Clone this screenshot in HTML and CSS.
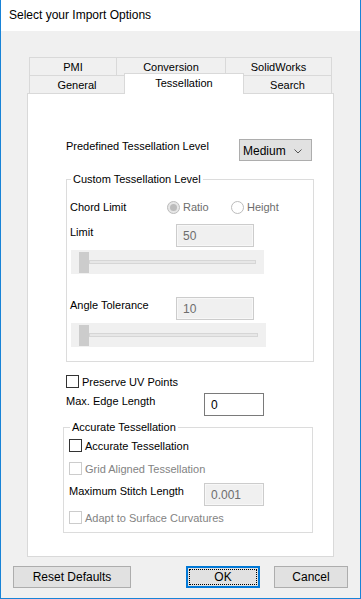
FILE: index.html
```html
<!DOCTYPE html>
<html lang="en">
<head>
    <meta charset="UTF-8">
    <title>Select your Import Options</title>
    <link rel="stylesheet" href="styles.css">
</head>
<body>
    <div class="window">
        <div class="titlebar">Select your Import Options</div>

        <div class="client">
            <div class="tabs">
                <div class="tab-row">
                    <div class="tab tab-pmi">PMI</div>
                    <div class="tab tab-conversion">Conversion</div>
                    <div class="tab tab-solidworks">SolidWorks</div>
                </div>
                <div class="tab-row row-front">
                    <div class="tab tab-general">General</div>
                    <div class="tab tab-tessellation active">Tessellation</div>
                    <div class="tab tab-search">Search</div>
                </div>
            </div>

            <div class="panel">
                <div class="row predefined">
                    <span class="label predefined-label">Predefined Tessellation Level</span>
                    <div class="select">
                        <span>Medium</span>
                        <svg width="8" height="5" viewBox="0 0 8 5"><path d="M0.5 0.5 L4 4 L7.5 0.5" fill="none" stroke="#555" stroke-width="1"/></svg>
                    </div>
                </div>

                <fieldset class="group custom">
                    <legend>Custom Tessellation Level</legend>

                    <div class="row chord">
                        <span class="label chord-label">Chord Limit</span>
                        <span class="radio-item ratio"><span class="radio checked"></span>Ratio</span>
                        <span class="radio-item"><span class="radio"></span>Height</span>
                    </div>

                    <div class="row field-row limit-row">
                        <span class="label field-label">Limit</span>
                        <div class="input disabled">50</div>
                    </div>
                    <div class="slider slider-1">
                        <div class="thumb"></div>
                        <div class="track"></div>
                    </div>

                    <div class="row field-row angle-row">
                        <span class="label field-label">Angle Tolerance</span>
                        <div class="input disabled">10</div>
                    </div>
                    <div class="slider slider-2">
                        <div class="thumb"></div>
                        <div class="track"></div>
                    </div>
                </fieldset>

                <div class="row check-row uv">
                    <span class="checkbox"></span>Preserve UV Points
                </div>

                <div class="row field-row edge-row">
                    <span class="label edge-label">Max. Edge Length</span>
                    <div class="input edge-input">0</div>
                </div>

                <fieldset class="group accurate">
                    <legend>Accurate Tessellation</legend>

                    <div class="row check-row acc-check">
                        <span class="checkbox"></span>Accurate Tessellation
                    </div>
                    <div class="row check-row grid-check off">
                        <span class="checkbox"></span>Grid Aligned Tessellation
                    </div>
                    <div class="row field-row stitch-row">
                        <span class="label stitch-label">Maximum Stitch Length</span>
                        <div class="input disabled stitch-input">0.001</div>
                    </div>
                    <div class="row check-row adapt-check off">
                        <span class="checkbox"></span>Adapt to Surface Curvatures
                    </div>
                </fieldset>
            </div>

            <div class="buttons">
                <button class="btn reset">Reset Defaults</button>
                <button class="btn ok">OK</button>
                <button class="btn cancel">Cancel</button>
            </div>
        </div>
    </div>
</body>
</html>
```

FILE: styles.css
```css
body {
    margin: 0;
    font-family: "Liberation Sans", Arial, sans-serif;
    font-size: 11px;
    color: #000;
    background: #f0f0f0;
}
.window {
    width: 361px;
    height: 599px;
    box-sizing: border-box;
    border: 1px solid #1883d7;
    border-top: none;
    background: #f0f0f0;
}
.titlebar {
    height: 31px;
    line-height: 31px;
    padding-left: 8px;
    background: #ffffff;
    font-size: 12px;
}
.client {
    padding: 26px 12px 0 12px;
}

/* tabs */
.tabs {
    margin-left: 16px;
    width: 303px;
}
.tab-row {
    display: flex;
    height: 19px;
}
.row-front {
    margin-top: -1px;
    height: 18px;
}
.tab {
    box-sizing: border-box;
    height: 100%;
    border: 1px solid #d9d9d9;
    border-bottom: none;
    background: #f0f0f0;
    text-align: center;
    line-height: 18px;
}
.tab + .tab {
    margin-left: -1px;
}
.tab-pmi { width: 88px; }
.tab-conversion { width: 110px; }
.tab-solidworks { width: 107px; }
.tab-general { width: 96px; }
.tab-tessellation { width: 120px; }
.tab-search { width: 89px; }
.tab.active {
    position: relative;
    z-index: 1;
    background: #ffffff;
    height: 21px;
    margin-top: -2px;
    line-height: 18px;
}

/* panel */
.panel {
    box-sizing: border-box;
    margin-left: 14px;
    width: 307px;
    height: 464px;
    border: 1px solid #d9d9d9;
    background: #ffffff;
    padding: 45px 0 0 35px;
}
.row {
    display: flex;
    align-items: flex-start;
}
.label {
    line-height: 14px;
}
.predefined {
    margin-left: 3px;
    height: 22px;
}
.predefined-label {
    width: 173px;
}
.select {
    box-sizing: border-box;
    width: 73px;
    height: 22px;
    border: 1px solid #adadad;
    background: #e1e1e1;
    display: flex;
    align-items: center;
    justify-content: space-between;
    padding: 2px 9px 0 3px;
    font-size: 12px;
}

/* group boxes */
.group {
    margin: 0;
    padding: 0 0 0 3px;
    border: 1px solid #dcdcdc;
    box-sizing: border-box;
}
.group legend {
    padding: 0 2px;
    margin-left: 1px;
    line-height: 13px;
}
.custom {
    margin: 12px 0 0 3px;
    width: 248px;
    padding-bottom: 14px;
}
.accurate {
    margin-top: 5px;
    width: 250px;
    padding-left: 5px;
    padding-bottom: 8px;
}

.chord {
    margin-top: 14px;
    height: 14px;
    align-items: center;
}
.chord-label {
    width: 97px;
}
.radio-item {
    display: flex;
    align-items: center;
    color: #6d6d6d;
}
.ratio {
    width: 64px;
}
.radio {
    box-sizing: border-box;
    width: 13px;
    height: 13px;
    border: 1px solid #bcbcbc;
    border-radius: 50%;
    background: #ffffff;
    margin-right: 3px;
    display: flex;
    align-items: center;
    justify-content: center;
}
.radio.checked {
    background: #e6e6e6;
}
.radio.checked::after {
    content: "";
    width: 7px;
    height: 7px;
    border-radius: 50%;
    background: #bcbcbc;
}

.field-row {
    height: 23px;
}
.field-label {
    width: 106px;
    padding-top: 1px;
}
.limit-row {
    margin-top: 10px;
}
.angle-row {
    margin-top: 23px;
}
.input {
    box-sizing: border-box;
    width: 78px;
    height: 23px;
    border: 1px solid #7a7a7a;
    background: #ffffff;
    padding: 4px 0 0 6px;
    font-size: 12px;
}
.input.disabled {
    border-color: #cccccc;
    background: #f0f0f0;
    color: #6d6d6d;
    box-shadow: inset 0 0 0 1px #f7f7f7;
}

/* sliders */
.slider {
    margin: 3px 0 0 1px;
    height: 24px;
    background: #f0f0f0;
    display: flex;
    align-items: center;
    padding-left: 8px;
    box-sizing: border-box;
}
.slider-1 { width: 193px; }
.slider-2 { width: 195px; }
.thumb {
    width: 10px;
    height: 21px;
    background: #cccccc;
}
.track {
    flex: 1;
    height: 2px;
    margin-right: 8px;
    border: 1px solid #d6d6d6;
    background: #e7e7e7;
}

/* checkboxes */
.check-row {
    height: 13px;
    align-items: center;
}
.checkbox {
    box-sizing: border-box;
    width: 13px;
    height: 13px;
    border: 1px solid #333333;
    background: #ffffff;
    margin-right: 3px;
}
.check-row.off {
    color: #838383;
}
.check-row.off .checkbox {
    border-color: #cccccc;
}
.uv {
    margin: 13px 0 0 3px;
}
.edge-row {
    margin: 5px 0 0 3px;
}
.edge-label {
    width: 138px;
    padding-top: 1px;
}
.edge-input {
    width: 60px;
}
.acc-check {
    margin-top: 5px;
}
.grid-check {
    margin-top: 10px;
}
.stitch-row {
    margin-top: 8px;
}
.stitch-label {
    width: 135px;
    padding-top: 1px;
}
.stitch-input {
    width: 60px;
}
.adapt-check {
    margin-top: 5px;
}

/* buttons */
.buttons {
    display: flex;
    margin-top: 9px;
}
.btn {
    box-sizing: border-box;
    height: 22px;
    border: 1px solid #adadad;
    background: #e1e1e1;
    font-family: "Liberation Sans", Arial, sans-serif;
    font-size: 12px;
    color: #000;
    padding: 0;
}
.reset {
    width: 118px;
}
.ok {
    width: 74px;
    margin-left: auto;
    border-color: #0078d7;
    box-shadow: inset 0 0 0 1px #0078d7;
    outline: 1px dotted #000;
    outline-offset: -4px;
}
.cancel {
    width: 74px;
    margin-left: 14px;
}
```
